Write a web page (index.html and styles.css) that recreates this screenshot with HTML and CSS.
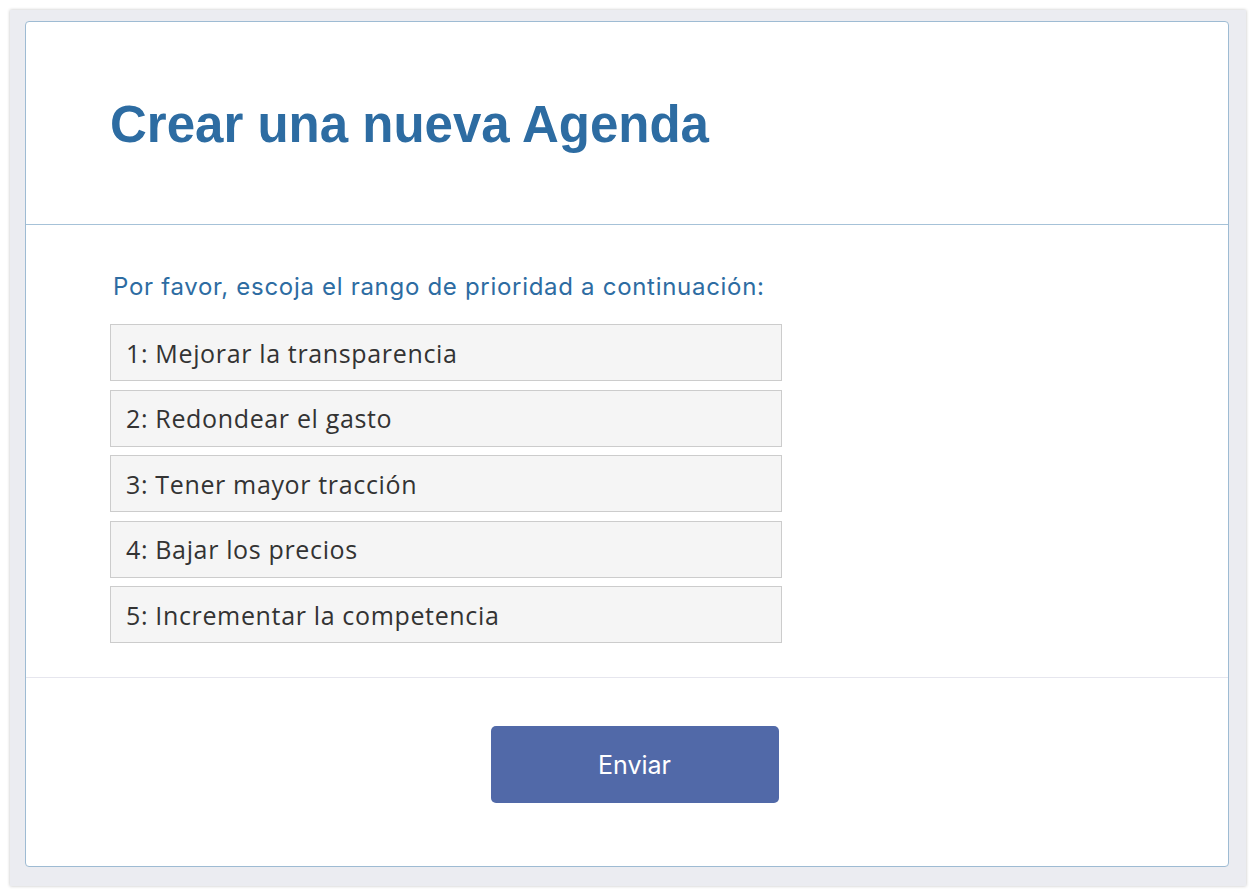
FILE: index.html
```html
<!DOCTYPE html>
<html lang="es">
<head>
<meta charset="utf-8">
<link rel="stylesheet" href="styles.css">
</head>
<body>
<div class="frame">
  <div class="card">
    <header class="card-header">
      <h1 class="title">Crear una nueva Agenda</h1>
    </header>
    <section class="card-body">
      <p class="prompt">Por favor, escoja el rango de prioridad a continuación:</p>
      <ul class="list">
        <li class="item">1: Mejorar la transparencia</li>
        <li class="item">2: Redondear el gasto</li>
        <li class="item">3: Tener mayor tracción</li>
        <li class="item">4: Bajar los precios</li>
        <li class="item">5: Incrementar la competencia</li>
      </ul>
    </section>
    <footer class="card-footer">
      <button class="submit" type="button">Enviar</button>
    </footer>
  </div>
</div>
</body>
</html>
```

FILE: styles.css
```css
* { box-sizing: border-box; }
html, body { margin: 0; padding: 0; background: #ffffff; }
.frame {
  margin: 10px;
  width: 1236px;
  height: 876px;
  background: #ebecf1;
  box-shadow: 0 0 3px rgba(0,0,0,0.25);
  padding: 11px 17px 19px 15px;
}
.card {
  height: 846px;
  background: #ffffff;
  border: 1px solid #9ebbd3;
  border-radius: 4px;
  display: flex;
  flex-direction: column;
}
.card-header {
  height: 203px;
  border-bottom: 1px solid #a6c2d8;
  padding: 73px 0 0 84px;
}
.title {
  margin: 0;
  font-family: "Liberation Sans", Arial, sans-serif;
  font-weight: bold;
  font-size: 51px;
  line-height: 60px;
  color: #2d6ca2;
}
.card-body {
  height: 453px;
  border-bottom: 1px solid #e6e6ee;
  padding: 46px 0 0 84px;
}
.prompt {
  margin: 0 0 21px 3px;
  font-family: Inter, "Noto Sans", sans-serif;
  font-size: 24px;
  line-height: 32px;
  letter-spacing: 0.7px;
  color: #2d6ca2;
}
.list {
  list-style: none;
  margin: 0;
  padding: 0;
  width: 672px;
  display: flex;
  flex-direction: column;
  gap: 8.5px;
}
.item {
  height: 57px;
  background: #f5f5f5;
  border: 1px solid #cccccc;
  padding: 0 15px;
  display: flex;
  align-items: center;
  font-family: "Open Sans", "Noto Sans", sans-serif;
  font-size: 25px;
  color: #333333;
  letter-spacing: 0.65px;
}
.card-footer {
  flex: 1;
  padding-top: 48px;
  padding-left: 15px;
  display: flex;
  justify-content: center;
  align-items: flex-start;
}
.submit {
  width: 288px;
  height: 77px;
  background: #5169a8;
  border: none;
  border-radius: 5px;
  color: #ffffff;
  font-family: Inter, "Noto Sans", sans-serif;
  font-size: 25px;
}
```
